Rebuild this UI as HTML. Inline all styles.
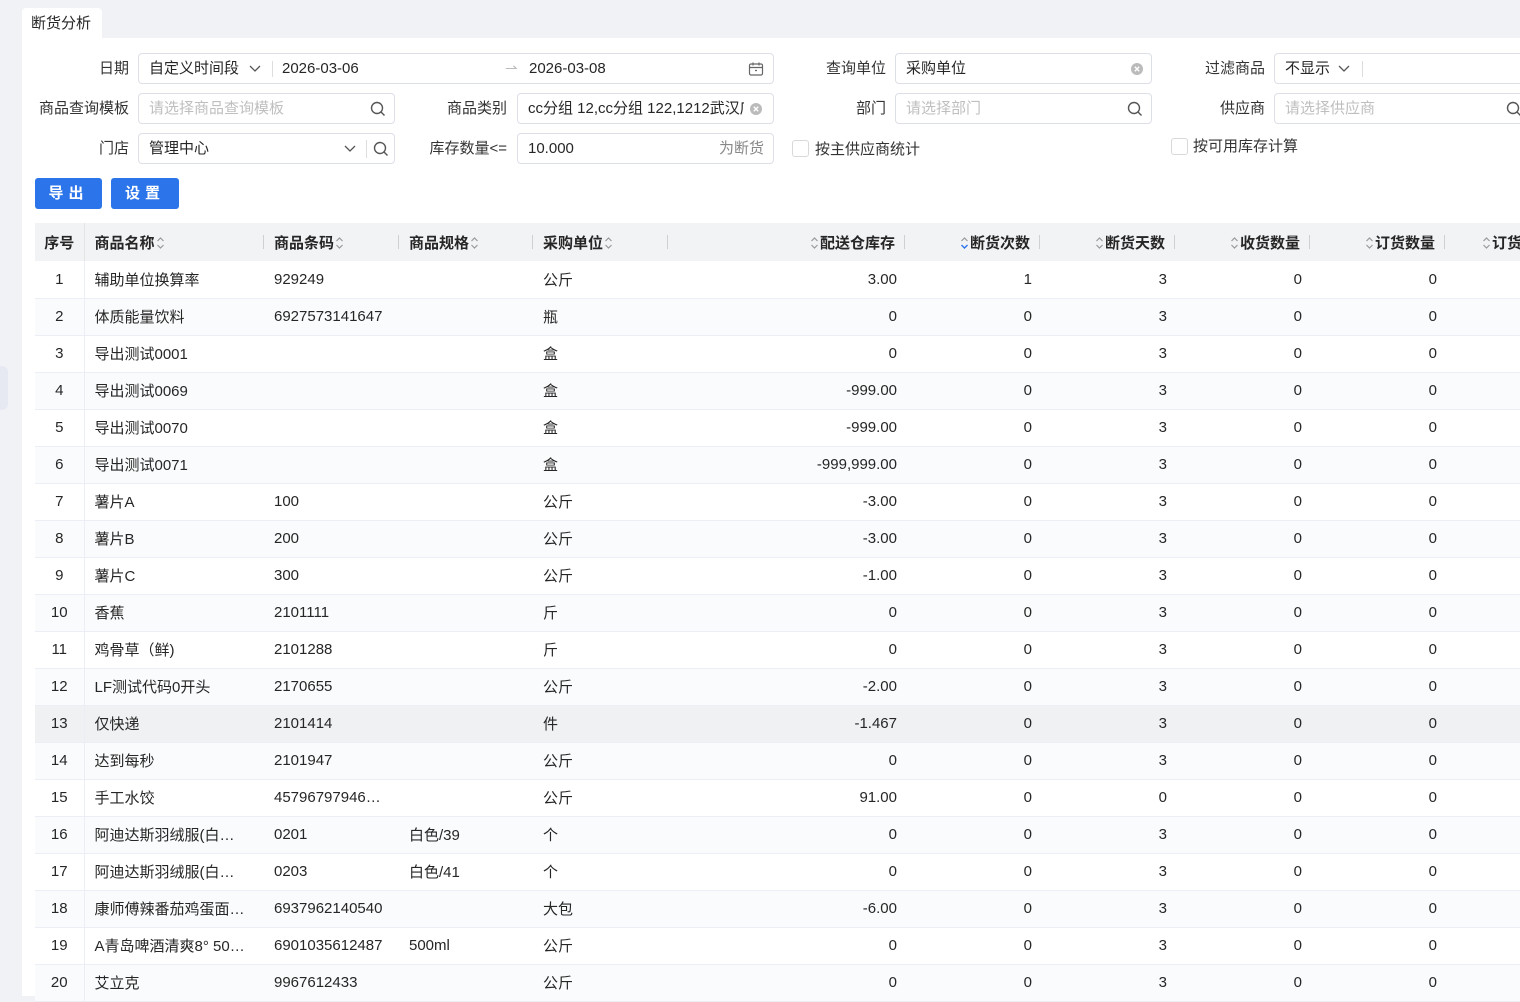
<!DOCTYPE html>
<html><head><meta charset="utf-8">
<style>
*{box-sizing:border-box;margin:0;padding:0}
body{width:1520px;height:996px;overflow:hidden;background:#f0f2f5;font-family:"Liberation Sans","Noto Sans CJK SC",sans-serif;font-size:15px;color:#262626;position:relative}
.tab{position:absolute;left:22px;top:8px;width:80px;height:31px;background:#fff;border-radius:4px 4px 0 0;font-size:15px;line-height:31px;padding-left:9px;color:#262626}
.panel{position:absolute;left:22px;top:38px;right:0;bottom:0;background:#fff}
.side{position:absolute;left:0;top:366px;width:8px;height:44px;background:#e6e9f2;border-radius:0 6px 6px 0}
.lbl{position:absolute;text-align:right;color:#333;font-size:15px;line-height:31px;white-space:nowrap}
.inp{position:absolute;height:31px;border:1px solid #dcdfe6;border-radius:4px;background:#fff;line-height:29px;padding-left:10px;font-size:15px;white-space:nowrap;overflow:hidden}
.ph{color:#bfbfbf}
.ic{position:absolute;top:7px}
.btn{position:absolute;top:178px;height:31px;background:#2b74ea;color:#fff;border-radius:3px;text-align:center;line-height:31px;font-size:15px;letter-spacing:5px;font-weight:bold}
.cb{position:absolute;width:17px;height:17px;border:1px solid #d9d9d9;border-radius:3px;background:#fff}
table{position:absolute;left:35px;top:223px;border-collapse:collapse;table-layout:fixed;width:1560px}
th{height:38px;background:#f2f3f5;font-weight:bold;font-size:15px;text-align:left;padding:0 10px;position:relative;white-space:nowrap;color:#262626}
th.r{text-align:right}
th .sep{position:absolute;right:0;top:12px;width:1px;height:14px;background:#d0d0d0}
td{height:37px;border-bottom:1px solid #ebeef5;padding:0 10px;white-space:nowrap;overflow:hidden;font-size:15px;color:#262626}
td.r{text-align:right;padding-right:8px}
td.c,th.c{text-align:center;padding:0}
td.c{border-right:1px solid #ebeef5}
th.c{border-right:1px solid #e4e4e4}
tr:nth-child(even) td{background:#fafbfc}
tr.hv td{background:#f0f1f3}
.so{display:inline-block;width:9px;height:14px;vertical-align:-2px;margin:0 1px}
</style></head><body>
<svg width="0" height="0" style="position:absolute"><defs>
<symbol id="s" viewBox="0 0 9 14"><path d="M1.5 5l3-3 3 3M1.5 9l3 3 3-3" fill="none" stroke="#999" stroke-width="1.2"/></symbol>
<symbol id="sb" viewBox="0 0 9 14"><path d="M1.5 5l3-3 3 3" fill="none" stroke="#999" stroke-width="1.2"/><path d="M1.5 9l3 3 3-3" fill="none" stroke="#2b74ea" stroke-width="1.4"/></symbol>
</defs></svg>
<div class="side"></div>
<div class="tab">断货分析</div>
<div class="panel"></div>

<div class="lbl" style="left:40px;width:89px;top:53px">日期</div>
<div class="inp" style="left:138px;top:53px;width:636px">自定义时间段
 <svg class="ic" style="left:110px;top:10px" width="12" height="10" viewBox="0 0 12 10"><path d="M1 2l5 5 5-5" fill="none" stroke="#555" stroke-width="1.3"/></svg>
 <span style="position:absolute;left:133px;top:7px;width:1px;height:16px;background:#ddd"></span>
 <span style="position:absolute;left:143px;top:0">2026-03-06</span>
 <span style="position:absolute;left:366px;top:0;color:#bbb">⇀</span>
 <span style="position:absolute;left:390px;top:0">2026-03-08</span>
 <svg class="ic" style="left:609px;top:7px" width="16" height="16" viewBox="0 0 16 16"><rect x="1.5" y="3" width="13" height="11" rx="1.5" fill="none" stroke="#666" stroke-width="1.2"/><path d="M5 1.5v3M11 1.5v3M1.5 6.5h13M7 9.5h2" stroke="#666" stroke-width="1.2"/></svg>
</div>
<div class="lbl" style="left:790px;width:96px;top:53px">查询单位</div>
<div class="inp" style="left:895px;top:53px;width:257px">采购单位
 <svg class="ic" style="left:234px;top:8px" width="14" height="14" viewBox="0 0 14 14"><circle cx="7" cy="7" r="6" fill="#bbb"/><path d="M4.8 4.8l4.4 4.4M9.2 4.8l-4.4 4.4" stroke="#fff" stroke-width="1.4"/></svg>
</div>
<div class="lbl" style="left:1170px;width:95px;top:53px">过滤商品</div>
<div class="inp" style="left:1274px;top:53px;width:260px">不显示
 <svg class="ic" style="left:63px;top:10px" width="12" height="10" viewBox="0 0 12 10"><path d="M1 2l5 5 5-5" fill="none" stroke="#555" stroke-width="1.3"/></svg>
 <span style="position:absolute;left:87px;top:7px;width:1px;height:16px;background:#ddd"></span>
</div>

<div class="lbl" style="left:20px;width:109px;top:93px">商品查询模板</div>
<div class="inp" style="left:138px;top:93px;width:257px"><span class="ph">请选择商品查询模板</span>
 <svg class="ic" style="left:231px" width="16" height="16" viewBox="0 0 16 16"><circle cx="7" cy="7" r="5.5" fill="none" stroke="#555" stroke-width="1.4"/><path d="M11 11l3.5 3.5" stroke="#555" stroke-width="1.4"/></svg>
</div>
<div class="lbl" style="left:410px;width:97px;top:93px">商品类别</div>
<div class="inp" style="left:517px;top:93px;width:257px"><span style="display:inline-block;width:216px;overflow:hidden;vertical-align:top">cc分组 12,cc分组 122,1212武汉店</span>
 <svg class="ic" style="left:231px;top:8px" width="14" height="14" viewBox="0 0 14 14"><circle cx="7" cy="7" r="6" fill="#bbb"/><path d="M4.8 4.8l4.4 4.4M9.2 4.8l-4.4 4.4" stroke="#fff" stroke-width="1.4"/></svg>
</div>
<div class="lbl" style="left:790px;width:96px;top:93px">部门</div>
<div class="inp" style="left:895px;top:93px;width:257px"><span class="ph">请选择部门</span>
 <svg class="ic" style="left:231px" width="16" height="16" viewBox="0 0 16 16"><circle cx="7" cy="7" r="5.5" fill="none" stroke="#555" stroke-width="1.4"/><path d="M11 11l3.5 3.5" stroke="#555" stroke-width="1.4"/></svg>
</div>
<div class="lbl" style="left:1170px;width:95px;top:93px">供应商</div>
<div class="inp" style="left:1274px;top:93px;width:260px"><span class="ph">请选择供应商</span>
 <svg class="ic" style="left:231px" width="16" height="16" viewBox="0 0 16 16"><circle cx="7" cy="7" r="5.5" fill="none" stroke="#555" stroke-width="1.4"/><path d="M11 11l3.5 3.5" stroke="#555" stroke-width="1.4"/></svg>
</div>

<div class="lbl" style="left:40px;width:89px;top:133px">门店</div>
<div class="inp" style="left:138px;top:133px;width:257px">管理中心
 <svg class="ic" style="left:205px;top:10px" width="12" height="10" viewBox="0 0 12 10"><path d="M1 2l5 5 5-5" fill="none" stroke="#555" stroke-width="1.3"/></svg>
 <span style="position:absolute;left:227px;top:6px;width:1px;height:18px;background:#ddd"></span>
 <svg class="ic" style="left:234px" width="16" height="16" viewBox="0 0 16 16"><circle cx="7" cy="7" r="5.5" fill="none" stroke="#555" stroke-width="1.4"/><path d="M11 11l3.5 3.5" stroke="#555" stroke-width="1.4"/></svg>
</div>
<div class="lbl" style="left:400px;width:107px;top:133px">库存数量&lt;=</div>
<div class="inp" style="left:517px;top:133px;width:257px">10.000<span style="position:absolute;right:9px;top:0;color:#888">为断货</span></div>
<div class="cb" style="left:792px;top:140px"></div>
<div class="lbl" style="left:815px;top:134px;text-align:left">按主供应商统计</div>
<div class="cb" style="left:1171px;top:138px"></div>
<div class="lbl" style="left:1193px;top:131px;text-align:left">按可用库存计算</div>

<div class="btn" style="left:35px;width:67px">导出</div>
<div class="btn" style="left:111px;width:68px">设置</div>

<table>
<colgroup><col style="width:49px"><col style="width:180px"><col style="width:135px"><col style="width:134px"><col style="width:135px"><col style="width:237px"><col style="width:135px"><col style="width:135px"><col style="width:135px"><col style="width:135px"><col style="width:190px"></colgroup>
<thead><tr>
<th class="c">序号</th>
<th>商品名称<svg class="so"><use href="#s"/></svg><span class="sep"></span></th>
<th>商品条码<svg class="so"><use href="#s"/></svg><span class="sep"></span></th>
<th>商品规格<svg class="so"><use href="#s"/></svg><span class="sep"></span></th>
<th>采购单位<svg class="so"><use href="#s"/></svg><span class="sep"></span></th>
<th class="r"><svg class="so"><use href="#s"/></svg>配送仓库存<span class="sep"></span></th>
<th class="r"><svg class="so"><use href="#sb"/></svg>断货次数<span class="sep"></span></th>
<th class="r"><svg class="so"><use href="#s"/></svg>断货天数<span class="sep"></span></th>
<th class="r"><svg class="so"><use href="#s"/></svg>收货数量<span class="sep"></span></th>
<th class="r"><svg class="so"><use href="#s"/></svg>订货数量<span class="sep"></span></th>
<th style="padding-left:36px"><svg class="so"><use href="#s"/></svg>订货金额</th>
</tr></thead>
<tbody>
<tr><td class="c">1</td><td>辅助单位换算率</td><td>929249</td><td></td><td>公斤</td><td class="r">3.00</td><td class="r">1</td><td class="r">3</td><td class="r">0</td><td class="r">0</td><td></td></tr>
<tr><td class="c">2</td><td>体质能量饮料</td><td>6927573141647</td><td></td><td>瓶</td><td class="r">0</td><td class="r">0</td><td class="r">3</td><td class="r">0</td><td class="r">0</td><td></td></tr>
<tr><td class="c">3</td><td>导出测试0001</td><td></td><td></td><td>盒</td><td class="r">0</td><td class="r">0</td><td class="r">3</td><td class="r">0</td><td class="r">0</td><td></td></tr>
<tr><td class="c">4</td><td>导出测试0069</td><td></td><td></td><td>盒</td><td class="r">-999.00</td><td class="r">0</td><td class="r">3</td><td class="r">0</td><td class="r">0</td><td></td></tr>
<tr><td class="c">5</td><td>导出测试0070</td><td></td><td></td><td>盒</td><td class="r">-999.00</td><td class="r">0</td><td class="r">3</td><td class="r">0</td><td class="r">0</td><td></td></tr>
<tr><td class="c">6</td><td>导出测试0071</td><td></td><td></td><td>盒</td><td class="r">-999,999.00</td><td class="r">0</td><td class="r">3</td><td class="r">0</td><td class="r">0</td><td></td></tr>
<tr><td class="c">7</td><td>薯片A</td><td>100</td><td></td><td>公斤</td><td class="r">-3.00</td><td class="r">0</td><td class="r">3</td><td class="r">0</td><td class="r">0</td><td></td></tr>
<tr><td class="c">8</td><td>薯片B</td><td>200</td><td></td><td>公斤</td><td class="r">-3.00</td><td class="r">0</td><td class="r">3</td><td class="r">0</td><td class="r">0</td><td></td></tr>
<tr><td class="c">9</td><td>薯片C</td><td>300</td><td></td><td>公斤</td><td class="r">-1.00</td><td class="r">0</td><td class="r">3</td><td class="r">0</td><td class="r">0</td><td></td></tr>
<tr><td class="c">10</td><td>香蕉</td><td>2101111</td><td></td><td>斤</td><td class="r">0</td><td class="r">0</td><td class="r">3</td><td class="r">0</td><td class="r">0</td><td></td></tr>
<tr><td class="c">11</td><td>鸡骨草（鲜)</td><td>2101288</td><td></td><td>斤</td><td class="r">0</td><td class="r">0</td><td class="r">3</td><td class="r">0</td><td class="r">0</td><td></td></tr>
<tr><td class="c">12</td><td>LF测试代码0开头</td><td>2170655</td><td></td><td>公斤</td><td class="r">-2.00</td><td class="r">0</td><td class="r">3</td><td class="r">0</td><td class="r">0</td><td></td></tr>
<tr class="hv"><td class="c">13</td><td>仅快递</td><td>2101414</td><td></td><td>件</td><td class="r">-1.467</td><td class="r">0</td><td class="r">3</td><td class="r">0</td><td class="r">0</td><td></td></tr>
<tr><td class="c">14</td><td>达到每秒</td><td>2101947</td><td></td><td>公斤</td><td class="r">0</td><td class="r">0</td><td class="r">3</td><td class="r">0</td><td class="r">0</td><td></td></tr>
<tr><td class="c">15</td><td>手工水饺</td><td>45796797946…</td><td></td><td>公斤</td><td class="r">91.00</td><td class="r">0</td><td class="r">0</td><td class="r">0</td><td class="r">0</td><td></td></tr>
<tr><td class="c">16</td><td>阿迪达斯羽绒服(白…</td><td>0201</td><td>白色/39</td><td>个</td><td class="r">0</td><td class="r">0</td><td class="r">3</td><td class="r">0</td><td class="r">0</td><td></td></tr>
<tr><td class="c">17</td><td>阿迪达斯羽绒服(白…</td><td>0203</td><td>白色/41</td><td>个</td><td class="r">0</td><td class="r">0</td><td class="r">3</td><td class="r">0</td><td class="r">0</td><td></td></tr>
<tr><td class="c">18</td><td>康师傅辣番茄鸡蛋面…</td><td>6937962140540</td><td></td><td>大包</td><td class="r">-6.00</td><td class="r">0</td><td class="r">3</td><td class="r">0</td><td class="r">0</td><td></td></tr>
<tr><td class="c">19</td><td>A青岛啤酒清爽8° 50…</td><td>6901035612487</td><td>500ml</td><td>公斤</td><td class="r">0</td><td class="r">0</td><td class="r">3</td><td class="r">0</td><td class="r">0</td><td></td></tr>
<tr><td class="c">20</td><td>艾立克</td><td>9967612433</td><td></td><td>公斤</td><td class="r">0</td><td class="r">0</td><td class="r">3</td><td class="r">0</td><td class="r">0</td><td></td></tr>
</tbody></table>
</body></html>
